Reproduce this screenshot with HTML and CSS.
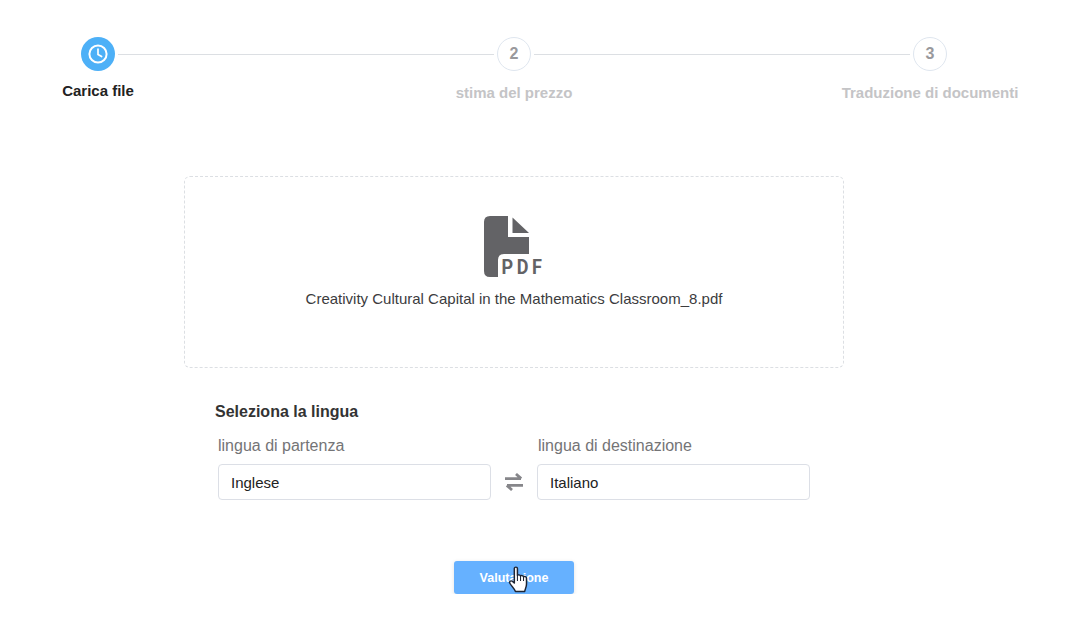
FILE: index.html
```html
<!DOCTYPE html>
<html>
<head>
    <meta charset="utf-8">
    <title>Carica file</title>
    <link rel="stylesheet" href="styles.css">
</head>
<body>
    <div class="steps">
        <div class="step-track">
            <span class="dot dot-active">
                <svg width="22" height="22" viewBox="0 0 22 22">
                    <circle cx="11" cy="11" r="8.6" fill="none" stroke="#fff" stroke-width="2"/>
                    <path d="M11 6v5.4l3.6 2.2" fill="none" stroke="#fff" stroke-width="1.7" stroke-linecap="round"/>
                </svg>
            </span>
            <span class="line"></span>
            <span class="dot">2</span>
            <span class="line"></span>
            <span class="dot">3</span>
        </div>
        <div class="step-labels">
            <span class="lbl lbl-active">Carica file</span>
            <span class="lbl">stima del prezzo</span>
            <span class="lbl">Traduzione di documenti</span>
        </div>
    </div>

    <div class="dropzone">
        <svg class="pdf" width="62" height="62" viewBox="0 0 62 62">
            <path d="M7 0H25V21H46V38H21Q15 38 15 44V61H7Q1 61 1 55V6Q1 0 7 0Z" fill="#636366"/>
            <path d="M29.5 1.5L46 17H29.5Z" fill="#636366"/>
            <text class="pdf-text" transform="translate(18.5 57.5) scale(.86 1)" textLength="47" lengthAdjust="spacing">PDF</text>
        </svg>
        <p class="filename">Creativity Cultural Capital in the Mathematics Classroom_8.pdf</p>
    </div>

    <div class="lang">
        <h4 class="lang-title">Seleziona la lingua</h4>
        <div class="lang-row">
            <div class="field">
                <label class="field-lbl">lingua di partenza</label>
                <div class="box">Inglese</div>
            </div>
            <svg class="swap" width="18" height="18" viewBox="0 0 18 18">
                <path d="M0 5.6H16M11 1L16.2 5.6" fill="none" stroke="#86868a" stroke-width="2.8"/>
                <path d="M18 12.4H2M7 17L1.8 12.4" fill="none" stroke="#86868a" stroke-width="2.8"/>
            </svg>
            <div class="field field-to">
                <label class="field-lbl">lingua di destinazione</label>
                <div class="box">Italiano</div>
            </div>
        </div>
    </div>

    <div class="actions">
        <button class="btn">Valutazione
            <svg class="hand" width="23" height="27" viewBox="0 0 20 27" preserveAspectRatio="none">
                <path d="M5.5 2.5C5.5 .6 8.2 .6 8.2 2.5V9.5C8.6 8.6 10.6 8.6 10.9 10C11.4 9.2 13.3 9.4 13.5 10.8C14.2 10.2 16 10.5 16.1 12.2V18C16.1 21 15 22.5 14.5 25.5H6.5C5.8 23 3.8 21 1.7 17.5C.6 15.6 2.4 14 4 15.5L5.5 17Z" fill="#fff" stroke="#1d2433" stroke-width="1.3" stroke-linejoin="round"/>
                <path d="M8.2 10V15M10.9 10V15M13.5 11V15" fill="none" stroke="#1d2433" stroke-width=".9"/>
            </svg>
        </button>
    </div>
</body>
</html>
```

FILE: styles.css
```css
body
{
    margin: 0;
    background-color: #fff;
    font-family: "Liberation Sans", Arial, sans-serif;
    color: #333;
}
.steps
{
    padding-top: 37px;
    height: 139px;
    box-sizing: border-box;
}
.step-track
{
    display: flex;
    align-items: center;
    gap: 3px;
    width: 866px;
    margin-left: 81px;
}
.dot
{
    flex: none;
    display: flex;
    align-items: center;
    justify-content: center;
    width: 34px;
    height: 34px;
    box-sizing: border-box;
    border: 1px solid #dfe6ef;
    border-radius: 50%;
    font-size: 16px;
    font-weight: bold;
    color: #99999c;
}
.dot-active
{
    border: none;
    background-color: #4db0f7;
}
.line
{
    flex: 1;
    height: 1px;
    background-color: #dcdfe3;
}
.step-labels
{
    display: flex;
    justify-content: space-between;
    width: 1012px;
    margin-left: 8px;
    margin-top: 13px;
}
.lbl
{
    width: 180px;
    text-align: center;
    font-size: 15px;
    line-height: 18px;
    font-weight: bold;
    color: #c4c4c6;
}
.lbl-active
{
    margin-top: -2px;
    color: #222;
}
.dropzone
{
    display: flex;
    flex-direction: column;
    align-items: center;
    width: 660px;
    height: 192px;
    box-sizing: border-box;
    margin: 37px 0 0 184px;
    padding-top: 39px;
    border: 1px dashed #dcdfe3;
    border-radius: 6px;
}
.pdf
{
    display: block;
}
.pdf-text
{
    font-family: Roboto, sans-serif;
    font-size: 21px;
    font-weight: 700;
    fill: #636366;
}
.filename
{
    margin: 12px 0 0;
    font-size: 15px;
    line-height: 18px;
    color: #3c3c3e;
}
.lang
{
    width: 596px;
    margin: 35px 0 0 215px;
}
.lang-title
{
    margin: 0;
    font-size: 16px;
    line-height: 18px;
    font-weight: bold;
    color: #333;
}
.lang-row
{
    display: flex;
    align-items: flex-end;
    margin: 16px 0 0 3px;
}
.field
{
    width: 273px;
}
.field-lbl
{
    display: block;
    font-size: 16px;
    line-height: 18px;
    color: #747476;
    margin-bottom: 9px;
}
.field-to .field-lbl
{
    margin-left: 1px;
}
.box
{
    height: 36px;
    box-sizing: border-box;
    padding-left: 12px;
    border: 1px solid #dcdfe6;
    border-radius: 4px;
    font-size: 15px;
    line-height: 35px;
    color: #222;
}
.swap
{
    flex: none;
    margin: 0 14px 9px 14px;
}
.actions
{
    display: flex;
    justify-content: center;
    width: 1028px;
    margin-top: 61px;
}
.btn
{
    position: relative;
    width: 120px;
    height: 33px;
    padding: 0;
    border: none;
    border-radius: 3px;
    background-color: #66b1ff;
    box-shadow: 0 1px 4px rgba(0, 0, 0, .12);
    font-family: inherit;
    font-size: 12.5px;
    font-weight: bold;
    color: #fff;
}
.hand
{
    position: absolute;
    left: 54px;
    top: 5px;
}
```
